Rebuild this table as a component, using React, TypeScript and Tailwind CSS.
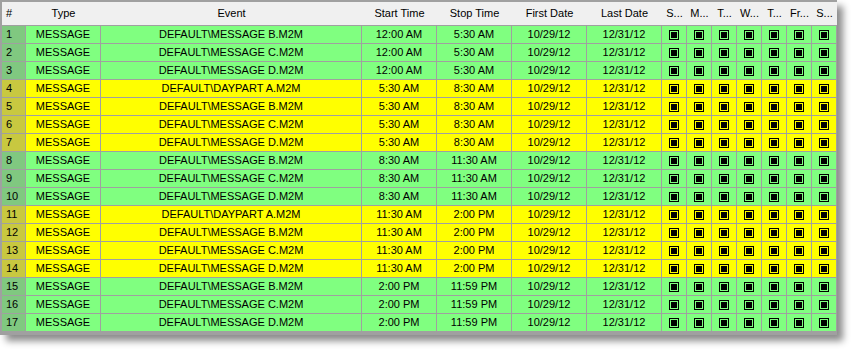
import React from "react";

type Row = { event: string; start: string; stop: string };

const rows: Row[] = [
  { event: "DEFAULT\\MESSAGE B.M2M", start: "12:00 AM", stop: "5:30 AM" },
  { event: "DEFAULT\\MESSAGE C.M2M", start: "12:00 AM", stop: "5:30 AM" },
  { event: "DEFAULT\\MESSAGE D.M2M", start: "12:00 AM", stop: "5:30 AM" },
  { event: "DEFAULT\\DAYPART A.M2M", start: "5:30 AM", stop: "8:30 AM" },
  { event: "DEFAULT\\MESSAGE B.M2M", start: "5:30 AM", stop: "8:30 AM" },
  { event: "DEFAULT\\MESSAGE C.M2M", start: "5:30 AM", stop: "8:30 AM" },
  { event: "DEFAULT\\MESSAGE D.M2M", start: "5:30 AM", stop: "8:30 AM" },
  { event: "DEFAULT\\MESSAGE B.M2M", start: "8:30 AM", stop: "11:30 AM" },
  { event: "DEFAULT\\MESSAGE C.M2M", start: "8:30 AM", stop: "11:30 AM" },
  { event: "DEFAULT\\MESSAGE D.M2M", start: "8:30 AM", stop: "11:30 AM" },
  { event: "DEFAULT\\DAYPART A.M2M", start: "11:30 AM", stop: "2:00 PM" },
  { event: "DEFAULT\\MESSAGE B.M2M", start: "11:30 AM", stop: "2:00 PM" },
  { event: "DEFAULT\\MESSAGE C.M2M", start: "11:30 AM", stop: "2:00 PM" },
  { event: "DEFAULT\\MESSAGE D.M2M", start: "11:30 AM", stop: "2:00 PM" },
  { event: "DEFAULT\\MESSAGE B.M2M", start: "2:00 PM", stop: "11:59 PM" },
  { event: "DEFAULT\\MESSAGE C.M2M", start: "2:00 PM", stop: "11:59 PM" },
  { event: "DEFAULT\\MESSAGE D.M2M", start: "2:00 PM", stop: "11:59 PM" },
];

const days = ["S...", "M...", "T...", "W...", "T...", "Fr...", "S..."];

const cols = "grid grid-cols-[24px_75px_261px_75px_75px_75px_75px_25px_25px_25px_25px_25px_25px_25px]";

const Check = () => (
  <span className="w-[10px] h-[10px] border border-black p-[1px] flex">
    <span className="flex-1 bg-black" />
  </span>
);

const cell = "h-[18px] border-r border-b border-[#a0a0a0] flex items-center justify-center";

export default function App() {
  return (
    <div className="w-[851px] h-[349px] bg-white" style={{ fontFamily: '"Liberation Sans", Arial, sans-serif' }}>
      <div className="w-[837px] border-t-2 border-l-2 border-b-[3px] border-[#a0a0a0] shadow-[6px_6px_7px_rgba(0,0,0,0.45)] text-[11px] text-black bg-[#f0f0f0]">
        <div className={`${cols} h-[24px] items-center bg-[#f0f0f0] border-b border-[#a0a0a0]`}>
          <div className="pl-1">#</div>
          <div className="text-center">Type</div>
          <div className="text-center">Event</div>
          <div className="text-center">Start Time</div>
          <div className="text-center">Stop Time</div>
          <div className="text-center">First Date</div>
          <div className="text-center">Last Date</div>
          {days.map((d, i) => (
            <div key={i} className="text-center">{d}</div>
          ))}
        </div>
        {rows.map((r, i) => {
          const yellow = (i >= 3 && i <= 6) || (i >= 10 && i <= 13);
          const bg = yellow ? "bg-[#ffff00]" : "bg-[#80ff80]";
          return (
            <div key={i} className={`${cols} ${bg}`}>
              <div className={`${cell} justify-start pl-1 ${yellow ? "bg-[#c8c840]" : "bg-[#80c880]"}`}>{i + 1}</div>
              <div className={cell}>MESSAGE</div>
              <div className={cell}>{r.event}</div>
              <div className={cell}>{r.start}</div>
              <div className={cell}>{r.stop}</div>
              <div className={cell}>10/29/12</div>
              <div className={cell}>12/31/12</div>
              {days.map((_, j) => (
                <div key={j} className={cell}>
                  <Check />
                </div>
              ))}
            </div>
          );
        })}
      </div>
    </div>
  );
}
